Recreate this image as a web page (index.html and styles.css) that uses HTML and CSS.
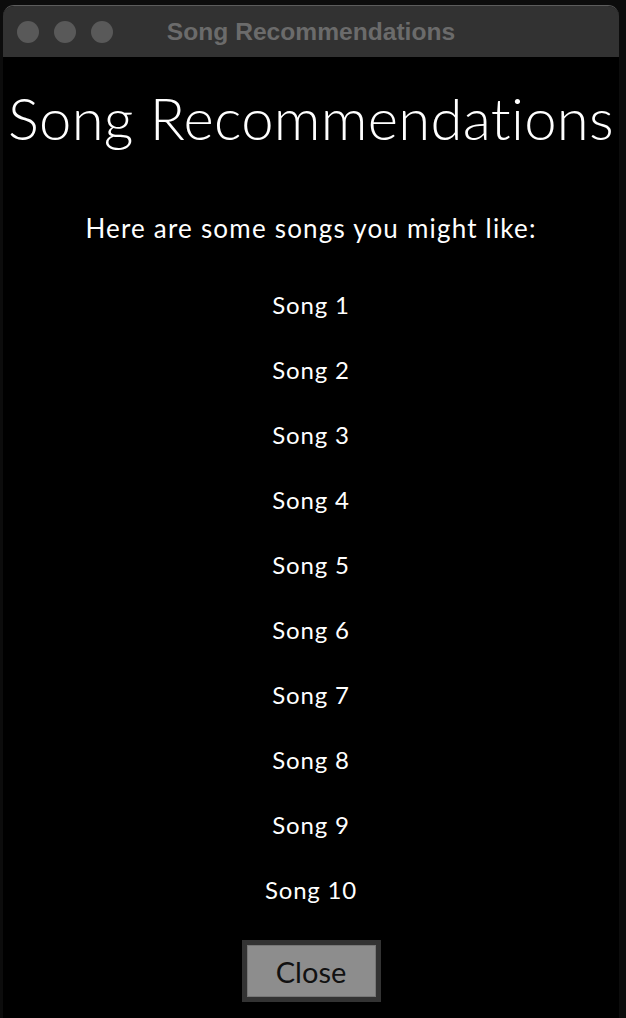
FILE: index.html
```html
<!DOCTYPE html>
<html>
<head>
<meta charset="utf-8">
<link rel="stylesheet" href="styles.css">
</head>
<body>
<div class="desktop">
  <div class="window">
    <div class="titlebar">
      <div class="lights">
        <span class="light"></span>
        <span class="light"></span>
        <span class="light"></span>
      </div>
      <div class="wtitle">Song Recommendations</div>
      <div></div>
    </div>
    <div class="content">
      <h1 class="heading">Song Recommendations</h1>
      <p class="subtitle">Here are some songs you might like:</p>
      <ul class="songs">
        <li>Song 1</li>
        <li>Song 2</li>
        <li>Song 3</li>
        <li>Song 4</li>
        <li>Song 5</li>
        <li>Song 6</li>
        <li>Song 7</li>
        <li>Song 8</li>
        <li>Song 9</li>
        <li>Song 10</li>
      </ul>
      <button class="close">Close</button>
    </div>
  </div>
</div>
</body>
</html>
```
FILE: styles.css
```css
html, body {
  margin: 0;
  padding: 0;
  background: #0c0c0c;
}
.desktop {
  height: 1018px;
  box-sizing: border-box;
  padding: 5px 7px 0 3px;
  overflow: hidden;
}
.window {
  height: 100%;
  background: #000;
  border-radius: 11px 11px 0 0;
  border-top: 1px solid #5c5c5c;
  overflow: hidden;
  display: flex;
  flex-direction: column;
}
.titlebar {
  height: 51px;
  flex: none;
  background: #323232;
  display: grid;
  grid-template-columns: 1fr auto 1fr;
  align-items: center;
}
.lights {
  display: flex;
  gap: 15px;
  padding-left: 14px;
}
.light {
  width: 22px;
  height: 22px;
  border-radius: 50%;
  background: #595959;
}
.wtitle {
  font-family: "Liberation Sans", Arial, sans-serif;
  font-weight: bold;
  font-size: 24.6px;
  color: #6b6b6b;
  line-height: 30px;
}
.content {
  display: flex;
  flex-direction: column;
  align-items: center;
  font-family: Lato, "Noto Sans", sans-serif;
  font-variant-ligatures: none;
  color: #fff;
}
.heading {
  margin: 26px 0 0;
  font-weight: 300;
  font-size: 58px;
  line-height: 70px;
  white-space: nowrap;
  letter-spacing: 0.3px;
}
.subtitle {
  margin: 60px 0 0;
  font-size: 26px;
  line-height: 30px;
  letter-spacing: 1.2px;
}
.songs {
  list-style: none;
  margin: 29px 0 0;
  padding: 0;
  text-align: center;
}
.songs li {
  font-size: 24px;
  line-height: 65px;
  letter-spacing: 0.8px;
}
.close {
  margin-top: 18px;
  width: 139px;
  height: 62px;
  box-sizing: border-box;
  border: 5px solid #333;
  outline: none;
  box-shadow: inset 0 0 0 1px #777;
  background: #8d8d8d;
  color: #111;
  font-family: Lato, "Noto Sans", sans-serif;
  font-size: 29px;
  padding: 0;
}
```
